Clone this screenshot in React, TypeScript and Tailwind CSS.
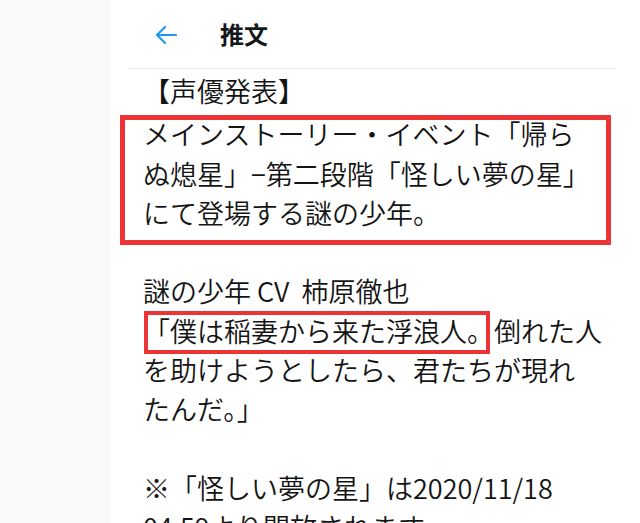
import React from "react";

export default function App() {
  const line = "block h-[39.3px] whitespace-nowrap";
  return (
    <div className="w-[640px] h-[523px] overflow-hidden bg-[#f7f9fa] flex font-['Noto_Sans_CJK_JP','Noto_Sans',sans-serif] text-[#141414]">
      <div className="w-[111px] shrink-0" />
      <div className="flex-1 bg-white">
        <div className="h-[68px] flex items-center pl-[44px]">
          <svg width="22" height="20" viewBox="0 0 22 20" fill="none" className="mt-[1px]">
            <path d="M21 10H2.5M10 2L2 10l8 8" stroke="#1d9bf0" strokeWidth="2.2" strokeLinecap="round" strokeLinejoin="round" />
          </svg>
          <span className="ml-[43px] text-[24px] font-bold leading-none font-['Noto_Sans_CJK_SC','Noto_Sans',sans-serif] text-[#14171a]">推文</span>
        </div>
        <div className="ml-[17px] w-[488px] h-px bg-[#eceff1]" />
        <div className="pl-[32px] pt-[2px] text-[27px] leading-[39.3px] font-[350]">
          <div className={line + " mb-[4px]"}>【声優発表】</div>
          <div className="relative">
            <span className={line}>メインストーリー・イベント「帰ら</span>
            <span className={line}>ぬ熄星」−第二段階「怪しい夢の星」</span>
            <span className={line}>にて登場する謎の少年。</span>
            <div className="absolute top-[1px] left-[-23px] w-[491px] bottom-[-13px] border-[5px] border-[#ec3437] pointer-events-none" />
          </div>
          <span className={line}>&nbsp;</span>
          <span className={line}>謎の少年 CV&nbsp; 柿原徹也</span>
          <span className={line}>
            <span className="relative inline-block">
              「僕は稲妻から来た浮浪人。
              <span className="absolute top-0 left-[1px] w-[346px] bottom-[-4px] border-[4px] border-[#ec3437] pointer-events-none" />
            </span>
            倒れた人
          </span>
          <span className={line}>を助けようとしたら、君たちが現れ</span>
          <span className={line}>たんだ。」</span>
          <span className={line}>&nbsp;</span>
          <span className={line}>※「怪しい夢の星」は2020/11/18</span>
          <span className={line}>04:59より開放されます</span>
        </div>
      </div>
    </div>
  );
}
